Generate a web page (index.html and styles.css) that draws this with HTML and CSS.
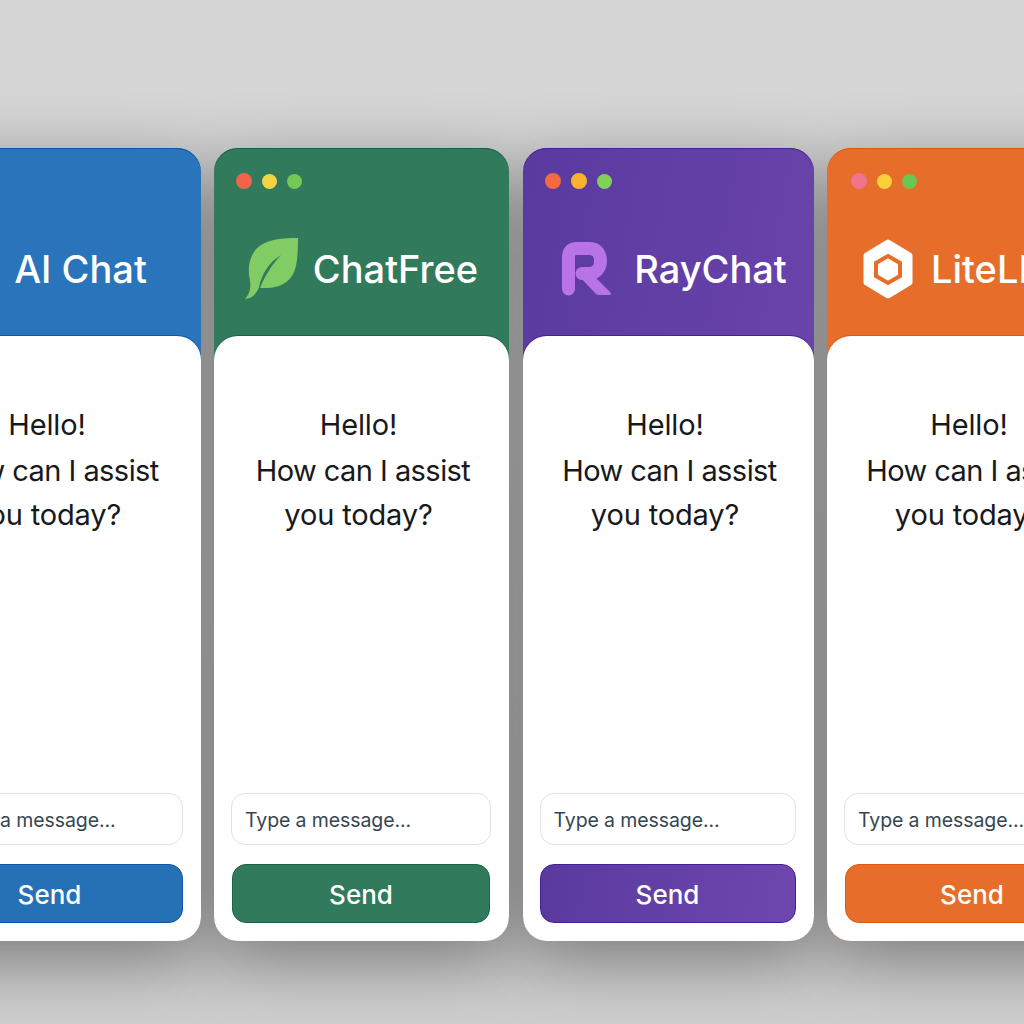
FILE: index.html

```html
<!DOCTYPE html>
<html lang="en">
<head>
    <meta charset="UTF-8">
    <title>Chat apps</title>
    <link rel="stylesheet" href="styles.css">
</head>
<body>
<div class="row">
    <div class="card card-blue">
        <div class="card-head">
            <div class="dots">
                <span class="dot dot-big" style="background: #f0654a"></span>
                <span class="dot" style="background: #f5d343"></span>
                <span class="dot" style="background: #74c952"></span>
            </div>
            <div class="brand">
                <div class="logo-blank"></div>
                <div class="brand-name">AI Chat</div>
            </div>
        </div>
        <div class="card-body">
            <div class="hello">Hello!<span class="line-two">How can I assist</span>you today?</div>
            <input class="msg-input" type="text" placeholder="Type a message...">
            <button class="send-btn">Send</button>
        </div>
    </div>

    <div class="card card-green">
        <div class="card-head">
            <div class="dots">
                <span class="dot dot-big" style="background: #f0654a"></span>
                <span class="dot" style="background: #f5d343"></span>
                <span class="dot" style="background: #74c952"></span>
            </div>
            <div class="brand">
                <svg class="logo" width="54" height="62" viewBox="11 10 54 62">
                    <path fill="#82cc66" d="M64 10C45 10 28 12 20 24C14 33 14 44 16 52C17 60 16 66 11 71C18 71 23 65 25 59C28 46 34 35 47 27C37 38 31 48 26 60C45 61 58 55 62 38C64 28 64 18 64 10Z"/>
                </svg>
                <div class="brand-name">ChatFree</div>
            </div>
        </div>
        <div class="card-body">
            <div class="hello">Hello!<span class="line-two">How can I assist</span>you today?</div>
            <input class="msg-input" type="text" placeholder="Type a message...">
            <button class="send-btn">Send</button>
        </div>
    </div>

    <div class="card card-purple">
        <div class="card-head">
            <div class="dots">
                <span class="dot dot-big" style="background: #f4693f"></span>
                <span class="dot dot-big" style="background: #fbb02f"></span>
                <span class="dot" style="background: #7fd257"></span>
            </div>
            <div class="brand">
                <svg class="logo" width="52" height="54" viewBox="12 10 52 54">
                    <path fill="none" stroke="#b874e6" stroke-width="13" stroke-linecap="round" stroke-linejoin="round" d="M19.5 57V25Q19.5 16.5 28 16.5H41C48 16.5 51.5 22 51.5 29C51.5 36 47 41.5 40 41.5H33"/>
                    <path fill="#b874e6" d="M28 42L47 62Q48 63 50 63H60Q63 63 61 60L45 44Z"/>
                </svg>
                <div class="brand-name">RayChat</div>
            </div>
        </div>
        <div class="card-body">
            <div class="hello">Hello!<span class="line-two">How can I assist</span>you today?</div>
            <input class="msg-input" type="text" placeholder="Type a message...">
            <button class="send-btn">Send</button>
        </div>
    </div>

    <div class="card card-orange">
        <div class="card-head">
            <div class="dots">
                <span class="dot dot-big" style="background: #f0728f"></span>
                <span class="dot" style="background: #fbd03a"></span>
                <span class="dot" style="background: #6cc64f"></span>
            </div>
            <div class="brand">
                <svg class="logo" width="52" height="60" viewBox="12 7 52 60">
                    <path fill="#fff" stroke="#fff" stroke-width="6" stroke-linejoin="round" d="M38 10.5L59.5 23.5V50.5L38 63.5L16.5 50.5V23.5Z"/>
                    <path fill="#fff" stroke="#e66e2a" stroke-width="4" d="M38 24L50 31V44L38 51L26 44V31Z"/>
                </svg>
                <div class="brand-name">LiteLLM</div>
            </div>
        </div>
        <div class="card-body">
            <div class="hello">Hello!<span class="line-two">How can I assist</span>you today?</div>
            <input class="msg-input" type="text" placeholder="Type a message...">
            <button class="send-btn">Send</button>
        </div>
    </div>
</div>
</body>
</html>
```

FILE: styles.css

```css
* {
    margin: 0;
    padding: 0;
    box-sizing: border-box;
}

html, body {
    height: 100%;
}

body {
    overflow: hidden;
    background: linear-gradient(#d6d6d6, #cfcfcf);
    font-family: Inter, "Liberation Sans", sans-serif;
}

.row {
    display: flex;
    gap: 13.5px;
    width: 1240px;
    margin-left: -100.5px;
    padding-top: 148px;
}

.card {
    position: relative;
    display: flex;
    flex-direction: column;
    flex: none;
    width: 291px;
    height: 793px;
    border-radius: 24px;
    box-shadow: inset 0 1px 0 var(--edge);
}

/* shadow sits under every card so a neighbour never darkens the white body */
.card::before {
    content: "";
    position: absolute;
    inset: 0;
    z-index: -1;
    border-radius: 24px;
    box-shadow: 0 20px 70px rgba(0, 0, 0, .42);
}

.card-blue {
    width: 301px;
    --accent: #2670b6;
    --edge: #0f55a5;
    background: linear-gradient(150deg, #2a74bc 50%, #18599c);
}

.card-green {
    width: 295px;
    --accent: #317a5c;
    --edge: #1a6346;
    background: #317a5c;
}

.card-purple {
    --accent: linear-gradient(100deg, #5a3a9f, #6e47ae);
    --edge: #43209a;
    background: linear-gradient(100deg, #5a3a9f, #6e47ae);
}

.card-orange {
    width: 290px;
    --accent: #e66e2a;
    --edge: #e4560f;
    background: #e66e2a;
}

.card-head {
    flex: none;
    height: 188px;
    padding: 25px 22px 0;
}

.dots {
    display: flex;
    align-items: center;
    gap: 10px;
    height: 16px;
}

.card-orange .dots {
    margin-left: 2px;
}

.dot {
    width: 15px;
    height: 15px;
    border-radius: 50%;
}

.dot-big {
    width: 16px;
    height: 16px;
}

.brand {
    display: flex;
    align-items: center;
    justify-content: center;
    gap: 14px;
    height: 62px;
    margin-top: 49px;
}

.card-blue .brand {
    gap: 15px;
}

.card-purple .brand {
    gap: 21px;
    margin-left: 12px;
}

.card-orange .brand {
    gap: 17px;
    justify-content: flex-start;
    margin-left: 13px;
}

.logo {
    flex: none;
    display: block;
}

.logo-blank {
    flex: none;
    width: 46px;
}

.brand-name {
    font-size: 38px;
    font-weight: 500;
    color: #fff;
    white-space: nowrap;
}

.card-body {
    flex: 1;
    display: flex;
    flex-direction: column;
    padding: 0 18px 18px 17px;
    background: #fff;
    border-radius: 24px;
    box-shadow: 0 -1px 0 var(--edge);
}

.hello {
    flex: 1;
    padding: 66px 5px 0 0;
    font-size: 29px;
    line-height: 45px;
    letter-spacing: -.15px;
    text-align: center;
    color: #17191c;
    white-space: nowrap;
}

.line-two {
    display: block;
    margin-left: 9px;
    padding-top: 1px;
    margin-bottom: -1px;
    letter-spacing: -.55px;
}

.msg-input {
    height: 52px;
    padding: 2px 13px 0;
    border: 1px solid #e2e2e2;
    border-radius: 14px;
    background: #fff;
    outline: none;
    font-family: inherit;
    font-size: 19.5px;
    letter-spacing: -.1px;
}

.card-blue .msg-input {
    padding-left: 32px;
}

.msg-input::placeholder {
    color: #364650;
    opacity: 1;
}

.send-btn {
    height: 59px;
    margin-top: 19px;
    padding-top: 1px;
    border: 1px solid var(--edge);
    border-radius: 14px;
    background: var(--accent);
    color: #fff;
    cursor: pointer;
    font-family: inherit;
    font-size: 26px;
    font-weight: 500;
}

.card-green .send-btn {
    margin-left: 1px;
    margin-right: 1px;
}

.card-orange .send-btn {
    margin-left: 1px;
}
```
